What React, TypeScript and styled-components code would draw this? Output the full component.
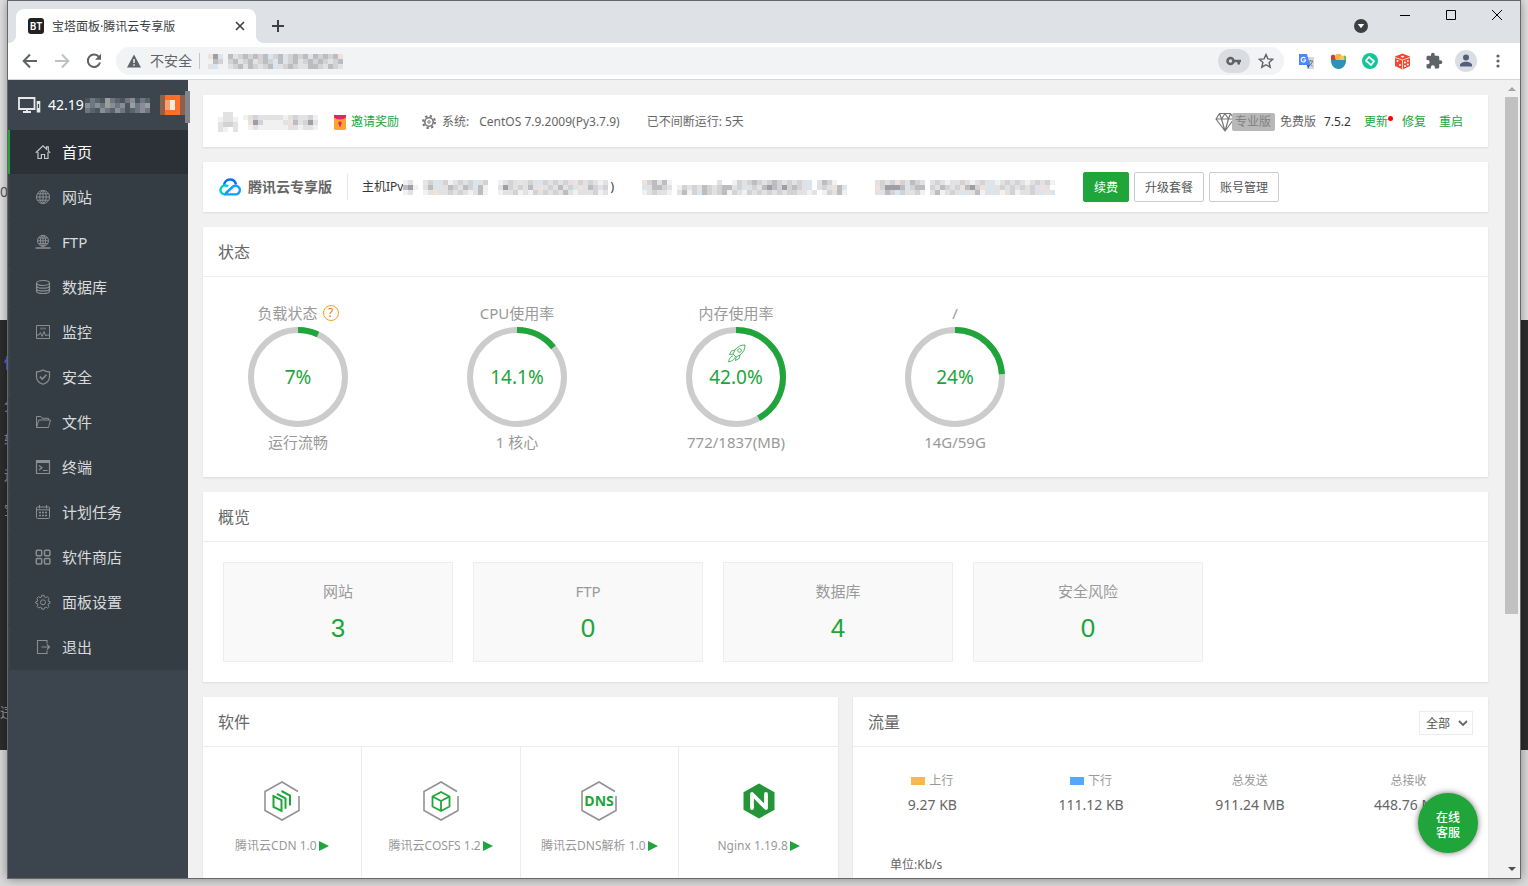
import React from "react";
import styled, { createGlobalStyle } from "styled-components";

const GREEN = "#20a53a";

const GlobalStyle = createGlobalStyle`
  * { box-sizing: border-box; }
  body {
    margin: 0;
    font-family: "Noto Sans", "Noto Sans CJK SC", sans-serif;
    font-size: 12px;
    line-height: 18px;
    color: #666;
  }
  button, select { font: inherit; color: inherit; cursor: pointer; }
  button { padding: 0; border: 0; background: none; }
  a { text-decoration: none; color: inherit; }
  ul, dl, dd, h1, h2, p { margin: 0; padding: 0; font-weight: 400; }
  ul { list-style: none; }
  svg { display: block; flex: none; }
`;

/* ---------- desktop and window frame ---------- */

const Desktop = styled.div`
  position: relative;
  height: 100vh;
  padding: 0 7px 7px;
  overflow: hidden;
  background: linear-gradient(#e2e2e2 320px, #2d2d2d 320px, #2d2d2d 750px, #dadada 750px);
`;

const Behind = styled.span<{ $top: number; $color: string; $flush?: boolean }>`
  position: absolute;
  left: 0;
  top: ${(p) => p.$top}px;
  width: 7px;
  padding-left: ${(p) => (p.$flush ? 0 : 4)}px;
  overflow: hidden;
  font-size: 14px;
  white-space: nowrap;
  color: ${(p) => p.$color};
`;

const BrowserWindow = styled.div`
  position: relative;
  display: flex;
  flex-direction: column;
  height: 100%;
  border: 1px solid #666769;
  background: #fff;
  box-shadow: 0 0 10px rgba(0, 0, 0, 0.4);
`;

const TitleBar = styled.header`
  display: flex;
  align-items: flex-end;
  flex: none;
  height: 42px;
  padding-left: 8px;
  background: #dee1e6;
`;

const Tab = styled.div`
  position: relative;
  display: flex;
  align-items: center;
  gap: 8px;
  width: 240px;
  height: 34px;
  padding: 0 10px 0 12px;
  border-radius: 8px 8px 0 0;
  background: #fff;
  color: #3c4043;
  &::before, &::after {
    content: "";
    position: absolute;
    bottom: 0;
    width: 8px;
    height: 8px;
  }
  &::before { left: -8px; background: radial-gradient(circle at 0 0, #dee1e6 8px, #fff 8px); }
  &::after { right: -8px; background: radial-gradient(circle at 100% 0, #dee1e6 8px, #fff 8px); }
`;

const Favicon = styled.span`
  width: 16px;
  height: 16px;
  border-radius: 3px;
  background: #222;
  color: #fff;
  font-size: 10px;
  font-weight: 600;
  line-height: 16px;
  text-align: center;
`;

const TabTitle = styled.span`
  flex: 1;
  padding-top: 2px;
  white-space: nowrap;
`;

const BareButton = styled.button<{ $w: number; $h: number; $bg?: string }>`
  display: flex;
  align-items: center;
  justify-content: center;
  flex: none;
  width: ${(p) => p.$w}px;
  height: ${(p) => p.$h}px;
  border-radius: 14px;
  background: ${(p) => p.$bg || "transparent"};
`;

const WindowControls = styled.div`
  display: flex;
  align-self: flex-start;
`;

const Spacer = styled.span`
  flex: 1;
`;

const Toolbar = styled.div`
  display: flex;
  align-items: center;
  flex: none;
  height: 37px;
  padding: 0 6px;
  border-bottom: 1px solid #d5d7da;
`;

const Omnibox = styled.div`
  display: flex;
  align-items: center;
  flex: 1;
  height: 28px;
  margin: 0 6px;
  padding: 0 2px 0 10px;
  border-radius: 14px;
  background: #f1f3f4;
  color: #5f6368;
  font-size: 14px;
`;

const InsecureLabel = styled.span`
  margin: 0 8px;
  padding-right: 7px;
  border-right: 1px solid #c4c7ca;
  line-height: 16px;
`;

/* ---------- panel ---------- */

const Viewport = styled.div`
  position: relative;
  display: flex;
  flex: 1;
  min-height: 0;
  overflow: hidden;
  background: #f1f1f1;
`;

const Sidebar = styled.aside`
  flex: none;
  width: 180px;
  background: #3c444d;
`;

const ServerName = styled.div`
  position: relative;
  display: flex;
  align-items: center;
  height: 50px;
  padding-left: 10px;
  color: #fff;
  font-size: 14px;
`;

const ServerAddress = styled.span`
  display: flex;
  align-items: center;
  gap: 1px;
  margin-left: 7px;
`;

const MessageBadge = styled.span`
  display: flex;
  margin-left: auto;
  margin-right: 3px;
`;

const SideHandle = styled.span`
  position: absolute;
  right: -2px;
  top: 11px;
  width: 5px;
  height: 32px;
  background: #80868c;
`;

const MenuLink = styled.a<{ $active?: boolean }>`
  display: flex;
  align-items: center;
  gap: 11px;
  height: 44px;
  margin-bottom: 1px;
  padding-left: 25px;
  border-left: 2px solid ${(p) => (p.$active ? GREEN : "#3c444d")};
  background: ${(p) => (p.$active ? "#2c3138" : "#353d44")};
  box-shadow: 0 1px #353d44;
  color: ${(p) => (p.$active ? "#fff" : "#d8dadc")};
  font-size: 15px;
  svg { color: ${(p) => (p.$active ? "#c4c6c8" : "#8a8f93")}; }
`;

const Main = styled.main`
  display: flex;
  flex-direction: column;
  gap: 15px;
  flex: 1;
  min-width: 0;
  padding: 15px;
`;

const Card = styled.section`
  flex: none;
  background: #fff;
  box-shadow: 0 1px 2px rgba(0, 0, 0, 0.09);
`;

const InfoBar = styled(Card)<{ $h: number; $drop?: number }>`
  display: flex;
  align-items: center;
  height: ${(p) => p.$h}px;
  padding: ${(p) => p.$drop || 0}px 25px 0 15px;
  white-space: nowrap;
`;

const Gap = styled.span<{ $w: number }>`
  flex: none;
  width: ${(p) => p.$w}px;
`;

const GreenLink = styled.a`
  position: relative;
  color: ${GREEN};
`;

const Dot = styled.i`
  position: absolute;
  right: -5px;
  top: 3px;
  width: 5px;
  height: 5px;
  border-radius: 50%;
  background: red;
`;

const ProBadge = styled.span`
  height: 18px;
  margin-left: -3px;
  padding: 0 4px 0 3px;
  border-radius: 2px;
  background: #b8b8b8;
  color: #808080;
`;

const Brand = styled.strong`
  margin-left: 6px;
  padding-right: 15px;
  border-right: 1px solid #e6e6e6;
  font-size: 14px;
  line-height: 26px;
`;

const HostText = styled.span`
  color: #333;
`;

const ActionButton = styled.button<{ $primary?: boolean }>`
  height: 30px;
  margin-right: 5px;
  padding: 2px 10px 0;
  border: 1px solid ${(p) => (p.$primary ? GREEN : "#ccc")};
  border-radius: 2px;
  background: ${(p) => (p.$primary ? GREEN : "#fff")};
  color: ${(p) => (p.$primary ? "#fff" : "#555")};
`;

const CardHead = styled.header`
  display: flex;
  align-items: center;
  justify-content: space-between;
  height: 50px;
  padding: 0 15px;
  border-bottom: 1px solid #ededed;
`;

const CardTitle = styled.h2`
  font-size: 16px;
  line-height: 24px;
`;

const GaugeRow = styled.div`
  display: flex;
  gap: 119px;
  height: 200px;
  padding: 25px 45px 0;
`;

const Gauge = styled.div`
  display: flex;
  flex-direction: column;
  align-items: center;
  width: 100px;
  color: #999;
  font-size: 15px;
  line-height: 22px;
  white-space: nowrap;
`;

const GaugeLabel = styled.p`
  display: flex;
  align-items: center;
  gap: 5px;
  height: 22px;
  margin-bottom: 3px;
`;

const HelpLink = styled.a`
  width: 16px;
  height: 16px;
  border: 1px solid #fc9d12;
  border-radius: 50%;
  color: #ff6d00;
  font-size: 12px;
  line-height: 14px;
  text-align: center;
`;

const Dial = styled.div`
  display: grid;
  place-items: center;
  margin-bottom: 4px;
  color: ${GREEN};
  font-size: 19px;
  > * { grid-area: 1 / 1; }
`;

const RocketSpot = styled.span`
  align-self: start;
  margin-top: 17px;
`;

const TileRow = styled.div`
  display: flex;
  gap: 20px;
  padding: 20px;
`;

const Tile = styled.a`
  display: flex;
  flex-direction: column;
  align-items: center;
  gap: 8px;
  width: 230px;
  height: 100px;
  padding-top: 17px;
  border: 1px solid #eee;
  background: #f9f9f9;
  color: #999;
  font-size: 15px;
  line-height: 22px;
`;

const TileNumber = styled.span`
  color: ${GREEN};
  font-family: "Liberation Sans", sans-serif;
  font-size: 26px;
  line-height: 36px;
`;

const Columns = styled.div`
  display: grid;
  grid-template-columns: 1fr 1fr;
  gap: 15px;
  flex: none;
`;

const SoftGrid = styled.div`
  display: grid;
  grid-template-columns: repeat(4, 1fr);
`;

const SoftCell = styled.a`
  display: flex;
  flex-direction: column;
  align-items: center;
  gap: 15px;
  height: 160px;
  padding-top: 33px;
  border-right: 1px solid #ebebf8;
  color: #999;
  &:last-child { border-right: 0; }
`;

const SoftName = styled.span`
  display: flex;
  align-items: center;
  gap: 2px;
  white-space: nowrap;
`;

const RangeSelect = styled.div`
  display: flex;
  align-items: center;
  position: relative;
  padding-top: 2px;
  select {
    appearance: none;
    width: 54px;
    height: 24px;
    padding: 2px 0 0 6px;
    border: 1px solid #ececec;
    border-radius: 0;
    background: #fff;
    color: #555;
  }
  svg { position: absolute; right: 5px; pointer-events: none; }
`;

const TrafficGrid = styled.dl`
  display: grid;
  grid-template-columns: repeat(4, 1fr);
  padding: 24px 0 38px;
  text-align: center;
  dt {
    display: flex;
    align-items: center;
    justify-content: center;
    gap: 4px;
    height: 20px;
    color: #999;
  }
  dd { margin-top: 4px; font-size: 14px; line-height: 20px; }
`;

const Swatch = styled.i<{ $color: string }>`
  width: 14px;
  height: 8px;
  background: ${(p) => p.$color};
`;

const Unit = styled.p`
  padding: 3px 37px 40px;
`;

const ScrollBar = styled.div`
  display: flex;
  flex-direction: column;
  align-items: center;
  flex: none;
  width: 17px;
  padding: 7px 0;
`;

const Thumb = styled.div`
  flex: 0 0 66%;
  width: 13px;
  margin: 6px 0 auto;
  background: #c1c1c1;
`;

const SupportButton = styled.button`
  position: absolute;
  right: 42px;
  bottom: 25px;
  width: 60px;
  height: 60px;
  padding-top: 4px;
  border-radius: 50%;
  background: ${GREEN};
  box-shadow: 0 0 6px rgba(0, 0, 0, 0.55);
  color: #fff;
  font-weight: 500;
  line-height: 15px;
`;

/* ---------- pixelated private data ---------- */

const SHADES: Record<string, string> = {
  a: "#f1f1f1", b: "#e2e2e3", c: "#d3d3d5", d: "#bdbcc0", e: "#dae5ed", f: "#eee2da", g: "#a09ea5",
  p: "#59636e", q: "#6d7781", r: "#4b555f", s: "#8b8d95", t: "#99a09c",
  w: "#ff6d26", x: "#8f5f4c", y: "#ff9f70", z: "#ffe9dd",
};

function Mosaic({ rows, cell = 5 }: { rows: string[]; cell?: number }) {
  const w = rows[0].length * cell;
  const h = rows.length * cell;
  return (
    <svg width={w} height={h} viewBox={`0 0 ${w} ${h}`} shapeRendering="crispEdges" aria-hidden="true">
      {rows.flatMap((row, y) =>
        [...row].map((c, x) =>
          SHADES[c] ? <rect key={`${x}-${y}`} x={x * cell} y={y * cell} width={cell} height={cell} fill={SHADES[c]} /> : null
        )
      )}
    </svg>
  );
}

/* ---------- icons ---------- */

type IconProps = { size?: number; sw?: number; box?: number; children: React.ReactNode };

function Line({ size = 16, box = 16, sw = 1, children }: IconProps) {
  return (
    <svg width={size} height={size} viewBox={`0 0 ${box} ${box}`} fill="none" stroke="currentColor" strokeWidth={sw} aria-hidden="true">
      {children}
    </svg>
  );
}

const menuIcons: Record<string, React.ReactNode> = {
  home: <path d="M.8 8.800 8 1.800l3.500 3.300V2.800h1.800v4L15.200 8.800M3 8v6.500h3.400v-4h3.200v4H13V8" strokeWidth="1.200" />,
  globe: <><circle cx="8" cy="8" r="6.500" /><ellipse cx="8" cy="8" rx="3.200" ry="6.500" /><path d="M8 1.500v13M1.500 8h13M2.500 4.800h11M2.500 11.200h11" /></>,
  ftp: <><circle cx="8" cy="6.800" r="5.500" /><ellipse cx="8" cy="6.800" rx="2.600" ry="5.500" /><path d="M8 1.300v11M2.500 6.800h11M3.400 4h9.200M3.400 9.600h9.200" /><path d="M.5 14h15M6 14h4" strokeWidth="1.600" /></>,
  db: <><ellipse cx="8" cy="4" rx="6.500" ry="2.500" strokeWidth="1.200" /><path d="M1.500 4v8c0 3.300 13 3.300 13 0V4M1.500 6.700c0 3.300 13 3.300 13 0M1.500 9.400c0 3.300 13 3.300 13 0" strokeWidth="1.200" /></>,
  monitor: <><path d="M1.500 1.500h13v13h-13z" /><path d="M5 4.500h6" strokeWidth="2" opacity=".5" /><path d="M1.500 11H4l1.400-2.500 1.700 4 2-5 1.600 4.500.8-1h3" /></>,
  shield: <><path d="M8 1c2 1.300 4 1.800 6.500 1.800V8c0 3.400-3 6-6.500 7.300C4.500 14 1.500 11.400 1.500 8V2.800C4 2.800 6 2.300 8 1z" strokeWidth="1.200" /><path d="m4.800 7.600 2.500 2.500 4.200-4.400" strokeWidth="1.500" /></>,
  folder: <path d="M1.500 13.500v-11h4.300l1.400 1.800h6.300V6M1.500 13.500 3.800 6h11.700l-2 7.500z" />,
  terminal: <><path d="M1.500 1.500h13v13h-13z" strokeWidth="1.200" /><path d="M2 3h12" strokeWidth="2" /><path d="m4 6.500 3 2.300-3 2.300M8 11.500h4.500" strokeWidth="1.200" /></>,
  calendar: <><rect x="1.500" y="3" width="13" height="11.500" rx="1" /><path d="M4.500 1v3.500M11.500 1v3.500M1.500 5.800h13" /><path d="M4 8.500h8M4 11.500h8" strokeDasharray="2 1" strokeWidth="1.400" /></>,
  store: <g strokeWidth="1.500"><rect x="1.300" y="1.300" width="5.400" height="5.400" rx="1" /><rect x="9.500" y="1.300" width="5.400" height="5.400" rx="1" /><rect x="1.300" y="9.500" width="5.400" height="5.400" rx="1" /><rect x="9.500" y="9.500" width="5.400" height="5.400" rx="1" /></g>,
  gear: <><path d="m6.700 1.300-.4 1.900-1.200.5-1.600-1-1.700 1.700 1 1.600-.5 1.300-1.500.4v1.500l1.700.4.500 1.300-1 1.600 1.600 1.600 1.600-1 1.200.5.400 1.600h2.400l.4-1.600 1.200-.5 1.600 1 1.600-1.600-1-1.600.5-1.300 1.500-.4V7.700l-1.500-.4-.5-1.300 1-1.600-1.700-1.700-1.600 1-1.200-.5-.4-1.900z" /><circle cx="8" cy="8.300" r="2.500" /></>,
  exit: <path d="M12 4.500v-3H2.500v13H12v-3M6.500 8h8M12 5.500 14.500 8 12 10.500" strokeWidth="1.100" />,
};

const menu: [string, string][] = [
  ["home", "首页"], ["globe", "网站"], ["ftp", "FTP"], ["db", "数据库"], ["monitor", "监控"], ["shield", "安全"],
  ["folder", "文件"], ["terminal", "终端"], ["calendar", "计划任务"], ["store", "软件商店"], ["gear", "面板设置"], ["exit", "退出"],
];

const extensionIcons: [string, React.ReactNode][] = [
  ["翻译", <svg width="17" height="17" viewBox="0 0 17 17"><path d="M7 4h9v12H9z" fill="#d5d8dc" /><path d="M10 8h5M12.500 7v1m2 0c-.5 2.500-2 4-4 5m.5-4c.8 2 2 3 3.500 4" stroke="#6b7a86" fill="none" /><path d="M1 1h8l3 11H1z" fill="#4a8af4" /><path d="M9 12h3l-2 4z" fill="#2b57c4" /><path d="M7.300 5.300A2.300 2.300 0 1 0 7.700 7H5.500" stroke="#fff" fill="none" strokeWidth="1.100" /></svg>],
  ["沙拉查词", <svg width="17" height="17" viewBox="0 0 18 17"><path d="M1 7V2.500L3 1l2 1 2 5z" fill="#c8403a" /><circle cx="9" cy="4" r="3.700" fill="#f6b53c" /><circle cx="13" cy="5" r="2.600" fill="#f8c95a" /><path d="m14.500 2 2.500 1v4h-2z" fill="#7bb84a" /><path d="M1 7h16c0 5-3 9.500-8 9.500S1 12 1 7z" fill="#2b93b8" /></svg>],
  ["同步", <svg width="16" height="16" viewBox="0 0 16 16"><circle cx="8" cy="8" r="8" fill="#11c79a" /><path d="M4.800 9.200 4 7.500 7 4l5 4.300-1.700 2.200M11.200 6.800l.8 1.700L9 12 4 7.700l1.700-2.200" stroke="#fff" strokeWidth="1.700" fill="none" strokeLinejoin="round" /></svg>],
  ["随机", <svg width="17" height="17" viewBox="0 0 17 17"><path d="m8.500.5 7.500 3v9.500l-7.500 3.500L1 13V3.500z" fill="#f8452f" /><path d="m1 4.500 7.500 2.500L16 4.500M8.500 7v9.500" stroke="#fff" strokeWidth=".8" fill="none" /><g fill="#fff"><ellipse cx="8.500" cy="3.600" rx="1.600" ry=".9" /><circle cx="3.500" cy="8" r="1" /><circle cx="6" cy="12" r="1" /><circle cx="11" cy="9.500" r="1" /><circle cx="13.800" cy="8" r="1" /><circle cx="11" cy="13" r="1" /><circle cx="13.800" cy="11.500" r="1" /></g></svg>],
  ["扩展程序", <svg width="18" height="18" viewBox="0 0 24 24" fill="#5f6368"><path d="M20.500 11H19V7c0-1.100-.9-2-2-2h-4V3.500a2.500 2.500 0 0 0-5 0V5H4c-1.100 0-2 .9-2 2v3.800h1.500a2.700 2.700 0 0 1 0 5.400H2V20c0 1.100.9 2 2 2h3.800v-1.500a2.700 2.700 0 0 1 5.400 0V22H17c1.100 0 2-.9 2-2v-4h1.500a2.500 2.500 0 0 0 0-5z" /></svg>],
  ["用户", <svg width="22" height="22" viewBox="0 0 22 22"><circle cx="11" cy="11" r="11" fill="#dadde3" /><g fill="#54607a"><circle cx="11" cy="7.500" r="3" /><path d="M5 16.500V15c0-2 3-3.300 6-3.300s6 1.300 6 3.300v1.500z" /></g></svg>],
  ["菜单", <svg width="4" height="16" viewBox="0 0 4 16" fill="#5f6368"><circle cx="2" cy="3" r="1.600" /><circle cx="2" cy="8" r="1.600" /><circle cx="2" cy="13" r="1.600" /></svg>],
];

const Hexagon = ({ children }: { children: React.ReactNode }) => (
  <svg width="38" height="42" viewBox="0 0 38 42" fill="none" aria-hidden="true">
    <path d="M35 11.500 19 2 2 11.500v19L19 40l17-9.500V16" stroke="#939393" strokeWidth="1.600" />
    {children}
  </svg>
);

const software: [string, React.ReactNode][] = [
  ["腾讯云CDN 1.0", <Hexagon><path d="M10.500 16v11l8 4V20zM14 13.800l8.500 4.500v10.500M18.500 11l8.500 4.500v10" stroke={GREEN} strokeWidth="2" /></Hexagon>],
  ["腾讯云COSFS 1.2", <Hexagon><path d="m19 12 8.500 4.500v10L19 31l-8.500-4.500v-10zM10.500 16.500 19 21l8.500-4.500M19 21v10" stroke={GREEN} strokeWidth="1.800" strokeLinejoin="round" /></Hexagon>],
  ["腾讯云DNS解析 1.0", <Hexagon><text x="19" y="26" textAnchor="middle" fontFamily="Open Sans" fontWeight="700" fontSize="14" fill={GREEN}>DNS</text></Hexagon>],
  ["Nginx 1.19.8", <svg width="38" height="42" viewBox="0 0 38 42" aria-hidden="true"><path d="m19 3.500 15.500 8.800v17.400L19 38.500 3.500 29.700V12.300z" fill="#259539" /><path d="M12 28V14l14 14V14" fill="none" stroke="#fff" strokeWidth="3.800" strokeLinecap="round" strokeLinejoin="round" /></svg>],
];

function Ring({ value }: { value: number }) {
  return (
    <svg width="100" height="100" viewBox="0 0 100 100" fill="none" strokeWidth="6" aria-hidden="true">
      <circle cx="50" cy="50" r="47" stroke="#ccc" />
      <circle cx="50" cy="50" r="47" stroke={GREEN} pathLength={100} strokeDasharray={`${value} 100`} transform="rotate(-90 50 50)" />
    </svg>
  );
}

const Rocket = () => (
  <Line size={19} box={19} sw={0.8}>
    <path d="M18 1c-4 0-7.500 1.500-10 5L6 10l3 3 4-2c3.500-2.500 5-6 5-10zM8 6 4.500 7 2.500 10.500 6 10M13 11l-1 3.500L8.500 16.500 9 13M6 12c-2 0-3.500 2-4.500 6 4-1 6-2.500 6-4.500" />
    <circle cx="12.500" cy="6.500" r="1.800" />
  </Line>
);

const gauges = [
  { label: "负载状态", help: true, value: 7, text: "7%", foot: "运行流畅" },
  { label: "CPU使用率", value: 14.1, text: "14.1%", foot: "1 核心" },
  { label: "内存使用率", value: 42, text: "42.0%", foot: "772/1837(MB)", rocket: true },
  { label: "/", value: 24, text: "24%", foot: "14G/59G" },
];

const overview: [string, number][] = [["网站", 3], ["FTP", 0], ["数据库", 4], ["安全风险", 0]];

const traffic: { label: string; value: string; color?: string }[] = [
  { label: "上行", value: "9.27 KB", color: "#f7b851" },
  { label: "下行", value: "111.12 KB", color: "#52a9ff" },
  { label: "总发送", value: "911.24 MB" },
  { label: "总接收", value: "448.76 MB" },
];

export default function App() {
  return (
    <>
      <GlobalStyle />
      <Desktop>
        <Behind $top={183} $color="#555" $flush>0:</Behind>
        <Behind $top={354} $color="#8a7cf0">快</Behind>
        <Behind $top={396} $color="#999">分</Behind>
        <Behind $top={431} $color="#999">转</Behind>
        <Behind $top={466} $color="#999">运</Behind>
        <Behind $top={501} $color="#999">宝</Behind>
        <Behind $top={703} $color="#999" $flush>违</Behind>
        <BrowserWindow>
          <TitleBar>
            <Tab>
              <Favicon>BT</Favicon>
              <TabTitle>宝塔面板·腾讯云专享版</TabTitle>
              <BareButton $w={12} $h={16} aria-label="关闭标签页">
                <Line size={10} box={10} sw={1.6}><path d="m1 1 8 8M9 1 1 9" /></Line>
              </BareButton>
            </Tab>
            <Gap $w={6} />
            <BareButton $w={32} $h={34} aria-label="新标签页">
              <Line size={14} box={14} sw={2}><path d="M7 1v12M1 7h12" stroke="#3c4043" /></Line>
            </BareButton>
            <Spacer />
            <BareButton $w={42} $h={34} aria-label="搜索标签页">
              <svg width="14" height="14" viewBox="0 0 14 14"><circle cx="7" cy="7" r="7" fill="#3c4043" /><path d="M3.800 5h6.400L7 9.300z" fill="#fff" /></svg>
            </BareButton>
            <WindowControls>
              <BareButton $w={46} $h={28} aria-label="最小化"><Line size={10} box={10}><path d="M0 5.500h10" stroke="#000" /></Line></BareButton>
              <BareButton $w={46} $h={28} aria-label="最大化"><Line size={10} box={10}><path d="M.5.5h9v9h-9z" stroke="#000" /></Line></BareButton>
              <BareButton $w={46} $h={28} aria-label="关闭"><Line size={10} box={10}><path d="m0 0 10 10M10 0 0 10" stroke="#000" /></Line></BareButton>
            </WindowControls>
          </TitleBar>

          <Toolbar>
            <BareButton $w={32} $h={28} aria-label="后退"><Line sw={2}><path d="M15 8H2M8 1.500 1.700 8 8 14.500" stroke="#5f6368" /></Line></BareButton>
            <BareButton $w={32} $h={28} aria-label="前进"><Line sw={2}><path d="M1 8h13M8 1.500 14.300 8 8 14.500" stroke="#bdc1c6" /></Line></BareButton>
            <BareButton $w={32} $h={28} aria-label="刷新">
              <Line sw={2}><path d="M13 4A6.200 6.200 0 1 0 14 9.500" stroke="#5f6368" /><path d="M15 .8v6H9z" fill="#5f6368" stroke="none" /></Line>
            </BareButton>
            <Omnibox>
              <svg width="16" height="16" viewBox="0 0 16 16"><path d="M8 1.500 15 14.500H1z" fill="#5f6368" /><path d="M8 6v4M8 11.200v1.600" stroke="#f1f3f4" strokeWidth="1.500" /></svg>
              <InsecureLabel>不安全</InsecureLabel>
              <Mosaic rows={["fge.dbcdcdcdecdbcdcdbdcdcdf", "adc.cdbcdbcdcedecdbcdcdcbcd", "bea.bcdbdcbcdebcdcbbddcbdcb"]} />
              <Spacer />
              <BareButton $w={32} $h={24} $bg="#dadce0" aria-label="密码">
                <svg width="16" height="10" viewBox="0 0 16 10"><circle cx="4.500" cy="5" r="3" fill="none" stroke="#5f6368" strokeWidth="2.600" /><path d="M7.500 5H15M12.700 5v3.500" stroke="#5f6368" strokeWidth="2.600" /></svg>
              </BareButton>
              <BareButton $w={32} $h={24} aria-label="收藏">
                <Line sw={1.4}><path d="m8 1.500 1.900 4.400 4.800.4-3.600 3.200 1.100 4.700L8 11.700l-4.200 2.500 1.100-4.700L1.300 6.300l4.800-.4z" /></Line>
              </BareButton>
            </Omnibox>
            {extensionIcons.map(([label, icon]) => (
              <BareButton key={label} $w={32} $h={28} aria-label={label}>{icon}</BareButton>
            ))}
          </Toolbar>

          <Viewport>
            <Sidebar>
              <ServerName>
                <svg width="23" height="18" viewBox="0 0 23 18" fill="none" stroke="#e8e9ea" strokeWidth="1.800"><path d="M1 2h15.500v11H1zM5 16h8M9 13v3" /><path d="M20.500 5v11.500" strokeWidth="3.600" /><path d="M20.500 8v4" stroke="#3c444d" strokeWidth="1.200" /></svg>
                <ServerAddress>
                  42.19
                  <Mosaic rows={["rqprtqprqsrqp", "sqsqtsqsrtqst", "qprsqpsqrpqsq"]} />
                </ServerAddress>
                <MessageBadge><Mosaic rows={["xwwwx", "xyzwx", "xyzwx", "xwwwx"]} /></MessageBadge>
                <SideHandle />
              </ServerName>
              <nav>
                <ul>
                  {menu.map(([icon, label]) => (
                    <li key={label}>
                      <MenuLink href="#" $active={icon === "home"}><Line>{menuIcons[icon]}</Line>{label}</MenuLink>
                    </li>
                  ))}
                </ul>
              </nav>
            </Sidebar>

            <Main>
              <InfoBar $h={52} $drop={2}>
                <Mosaic rows={[".bb.", "abba", "bccb", "ba.b"]} />
                <Gap $w={5} />
                <Mosaic rows={["abcbbbbbabcbbca", ".fgcaaaabfdbcgb", ".abaaaaaabbabba"]} />
                <Gap $w={15} />
                <svg width="14" height="16" viewBox="0 0 14 16"><rect x="1" y="1" width="12" height="15" rx="1.500" fill="#fba62b" /><path d="M1 1h12v2.500C10 6 4 6 1 3.500z" fill="#e5226b" /><path d="M7 7.500a1.700 1.700 0 0 0-1.500 2.600L7 13.500l1.500-3.400A1.700 1.700 0 0 0 7 7.500z" fill="#e5226b" /></svg>
                <Gap $w={4} />
                <GreenLink href="#">邀请奖励</GreenLink>
                <Gap $w={23} />
                <svg width="14" height="14" viewBox="0 0 14 14" fill="none" stroke="#777"><circle cx="7" cy="7" r="4.200" strokeWidth="1.600" /><circle cx="7" cy="7" r="6" strokeDasharray="2.300 2.412" strokeWidth="2" /><circle cx="7" cy="7" r="1.300" /></svg>
                <Gap $w={6} />
                <span>系统:</span>
                <Gap $w={10} />
                <span>CentOS 7.9.2009(Py3.7.9)</span>
                <Gap $w={27} />
                <span>已不间断运行: 5天</span>
                <Spacer />
                <svg width="20" height="20" viewBox="0 0 20 20" fill="#fff" stroke="#777" strokeWidth="1.200" strokeLinejoin="round"><path d="M4.500 1.500h11L19 7l-9 12L1 7zM1 7h18M4.500 1.500 6.500 7 10 19l3.500-12 2-5.500M6.500 7 10 1.500 13.500 7" /></svg>
                <ProBadge>专业版</ProBadge>
                <Gap $w={5} />
                <span>免费版</span>
                <Gap $w={8} />
                <HostText>7.5.2</HostText>
                <Gap $w={13} />
                <GreenLink href="#">更新<Dot /></GreenLink>
                <Gap $w={14} />
                <GreenLink href="#">修复</GreenLink>
                <Gap $w={13} />
                <GreenLink href="#">重启</GreenLink>
              </InfoBar>

              <InfoBar $h={50}>
                <svg width="24" height="18" viewBox="0 0 24 18" fill="none" strokeWidth="2.400">
                  <path d="M6 8C6 4 8.500 1.500 12 1.500S17.500 4 18 6.500" stroke="#006eff" />
                  <path d="M10 8.500A4.600 4.600 0 1 0 5.600 16.400" stroke="#00d2d4" />
                  <path d="M5.500 16.400h13A4.400 4.400 0 1 0 15 8.500L7.500 15.500" stroke="#0da0ff" />
                </svg>
                <Brand>腾讯云专享版</Brand>
                <Gap $w={14} />
                <HostText>主机IPv</HostText>
                <Mosaic rows={["ab..fcebcabcbcebc..abcbfbcbecbcbcbfcbcbab", "dga.bdbebdcbdceda..bgcbcbdbfbcbdbcefbdcbc", "ab..abfbbcbcbabda..abbcabacbcbcbdbabbbcab"]} />
                <Gap $w={2} />
                <HostText>)</HostText>
                <Gap $w={28} />
                <Mosaic rows={["fcdbda.........b..acbcdcbcdcbcbcbe.bdca..", "ebddcb.acbcbdcbcddbcebcbdgdcgcdcbe.bcbfde", "abcbba.bdacedcbcdacbacbcbcbcbccbbab.acbda"]} />
                <Gap $w={28} />
                <Mosaic rows={["bcbcfcbdcb.bcbabbcbabcbeabcbcbabcbca", "fcgggdecdd.cbdcbcfdgcfeebcbcbcbcefb.", "bbdcecbbca.bdabcbebbdabebabcabbcbefe"]} />
                <Gap $w={28} />
                <ActionButton $primary>续费</ActionButton>
                <ActionButton>升级套餐</ActionButton>
                <ActionButton>账号管理</ActionButton>
              </InfoBar>

              <Card>
                <CardHead><CardTitle>状态</CardTitle></CardHead>
                <GaugeRow>
                  {gauges.map((g) => (
                    <Gauge key={g.label}>
                      <GaugeLabel>{g.label}{g.help && <HelpLink href="#">?</HelpLink>}</GaugeLabel>
                      <Dial>
                        <Ring value={g.value} />
                        <span>{g.text}</span>
                        {g.rocket && <RocketSpot><Rocket /></RocketSpot>}
                      </Dial>
                      <p>{g.foot}</p>
                    </Gauge>
                  ))}
                </GaugeRow>
              </Card>

              <Card>
                <CardHead><CardTitle>概览</CardTitle></CardHead>
                <TileRow>
                  {overview.map(([label, count]) => (
                    <Tile key={label} href="#">{label}<TileNumber>{count}</TileNumber></Tile>
                  ))}
                </TileRow>
              </Card>

              <Columns>
                <Card>
                  <CardHead><CardTitle>软件</CardTitle></CardHead>
                  <SoftGrid>
                    {software.map(([name, icon]) => (
                      <SoftCell key={name} href="#">
                        {icon}
                        <SoftName>{name}<svg width="10" height="10" viewBox="0 0 10 10"><path d="M0 0v10l10-5z" fill={GREEN} /></svg></SoftName>
                      </SoftCell>
                    ))}
                  </SoftGrid>
                </Card>
                <Card>
                  <CardHead>
                    <CardTitle>流量</CardTitle>
                    <RangeSelect>
                      <select aria-label="网卡"><option>全部</option></select>
                      <Line size={10} box={10} sw={1.8}><path d="m1 3 4 4 4-4" /></Line>
                    </RangeSelect>
                  </CardHead>
                  <TrafficGrid>
                    {traffic.map((t) => (
                      <div key={t.label}>
                        <dt>{t.color && <Swatch $color={t.color} />}{t.label}</dt>
                        <dd>{t.value}</dd>
                      </div>
                    ))}
                  </TrafficGrid>
                  <Unit>单位:Kb/s</Unit>
                </Card>
              </Columns>
            </Main>

            <ScrollBar aria-hidden="true">
              <svg width="8" height="4" viewBox="0 0 8 4"><path d="M0 4h8L4 0z" fill="#a3a3a3" /></svg>
              <Thumb />
              <svg width="8" height="4" viewBox="0 0 8 4"><path d="M0 0h8L4 4z" fill="#505050" /></svg>
            </ScrollBar>
            <SupportButton>在线<br />客服</SupportButton>
          </Viewport>
        </BrowserWindow>
      </Desktop>
    </>
  );
}
